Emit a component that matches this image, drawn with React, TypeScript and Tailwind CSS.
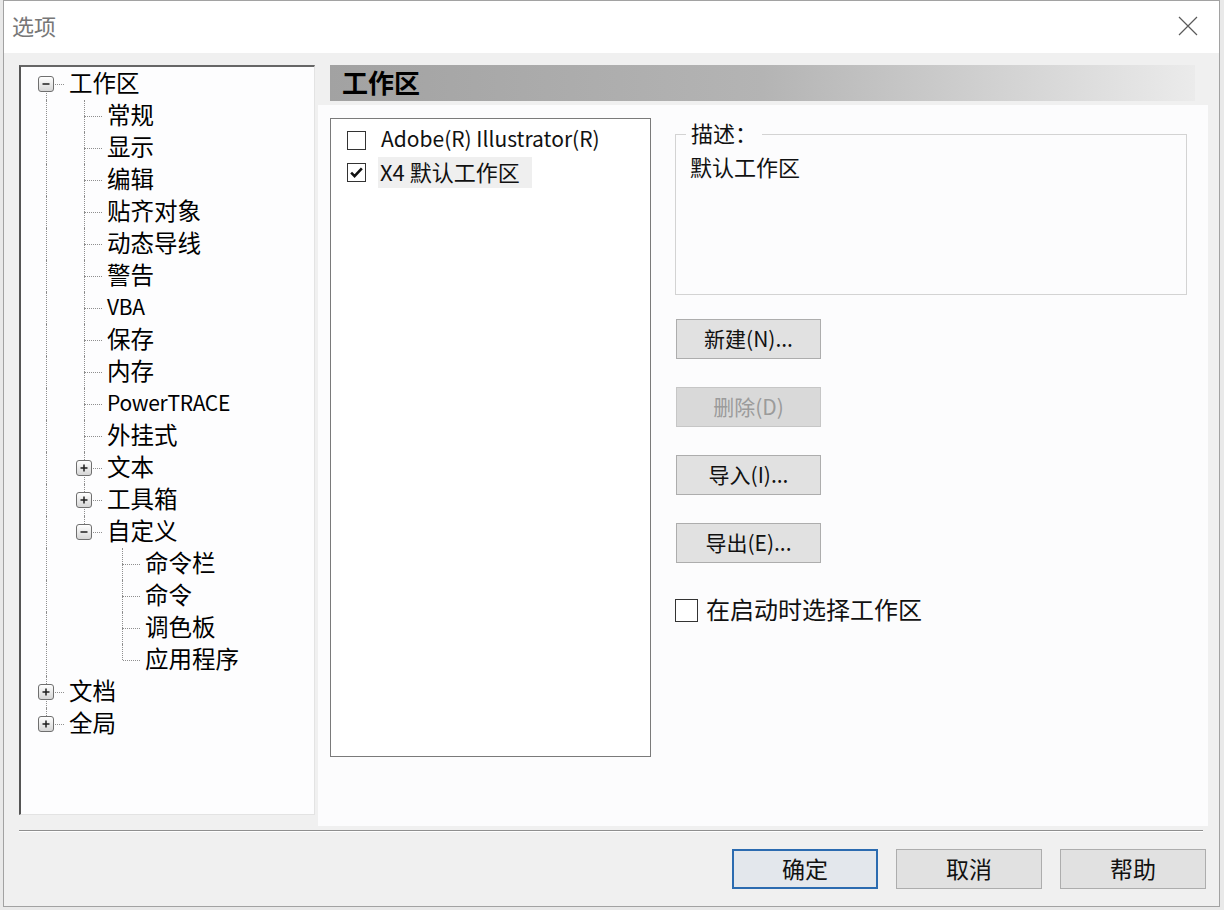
import { Fragment } from 'react'

type Row = {
  label: string
  level: number
  guides: boolean[]
  last: boolean
  first?: boolean
  exp?: 'open' | 'closed'
}

const ROWS: Row[] = [
  { label: '工作区', level: 0, guides: [], last: false, first: true, exp: 'open' },
  { label: '常规', level: 1, guides: [true], last: false },
  { label: '显示', level: 1, guides: [true], last: false },
  { label: '编辑', level: 1, guides: [true], last: false },
  { label: '贴齐对象', level: 1, guides: [true], last: false },
  { label: '动态导线', level: 1, guides: [true], last: false },
  { label: '警告', level: 1, guides: [true], last: false },
  { label: 'VBA', level: 1, guides: [true], last: false },
  { label: '保存', level: 1, guides: [true], last: false },
  { label: '内存', level: 1, guides: [true], last: false },
  { label: 'PowerTRACE', level: 1, guides: [true], last: false },
  { label: '外挂式', level: 1, guides: [true], last: false },
  { label: '文本', level: 1, guides: [true], last: false, exp: 'closed' },
  { label: '工具箱', level: 1, guides: [true], last: false, exp: 'closed' },
  { label: '自定义', level: 1, guides: [true], last: true, exp: 'open' },
  { label: '命令栏', level: 2, guides: [true, false], last: false },
  { label: '命令', level: 2, guides: [true, false], last: false },
  { label: '调色板', level: 2, guides: [true, false], last: false },
  { label: '应用程序', level: 2, guides: [true, false], last: true },
  { label: '文档', level: 0, guides: [], last: false, exp: 'closed' },
  { label: '全局', level: 0, guides: [], last: true, exp: 'closed' },
]

const DOT = 'border-dotted border-[#8f8f8f]'

function Expander({ open }: { open: boolean }) {
  return (
    <div className="absolute left-[11px] top-[8px] flex h-[16px] w-[16px] items-center justify-center rounded-[3px] border border-[#6f6f6f] bg-linear-to-b from-white to-[#d6d6d6]">
      <svg width="10" height="10" viewBox="0 0 10 10">
        <path d="M1.5 5h7" stroke="#1e1e1e" strokeWidth="1.5" />
        {!open && <path d="M5 1.5v7" stroke="#1e1e1e" strokeWidth="1.5" />}
      </svg>
    </div>
  )
}

function TreeRow({ row }: { row: Row }) {
  const latin = /^[A-Za-z]+$/.test(row.label)
  return (
    <div className="flex h-[32px] items-center">
      {row.guides.map((g, i) => (
        <div key={i} className="relative h-full w-[38px] shrink-0">
          {g && <div className={`absolute bottom-0 left-[19px] top-0 border-l ${DOT}`} />}
        </div>
      ))}
      <div className="relative h-full w-[38px] shrink-0">
        {!row.first && <div className={`absolute left-[19px] top-0 h-1/2 border-l ${DOT}`} />}
        {!row.last && <div className={`absolute bottom-0 left-[19px] top-1/2 border-l ${DOT}`} />}
        <div className={`absolute left-[20px] right-[1px] top-1/2 border-t ${DOT}`} />
        {row.exp && <Expander open={row.exp === 'open'} />}
      </div>
      <span
        className={`ml-[4px] whitespace-nowrap pb-[3px] leading-none text-black ${
          latin ? 'text-[21px] tracking-[-0.3px]' : 'text-[23.5px]'
        }`}
      >
        {row.label}
      </span>
    </div>
  )
}

function CheckBox({ checked, size = 18 }: { checked?: boolean; size?: number }) {
  return (
    <div
      className={`flex shrink-0 items-center justify-center border border-[#333] bg-white ${
        size === 18 ? 'h-[19px] w-[19px]' : 'h-[23px] w-[23px]'
      }`}
    >
      {checked && (
        <svg width="15" height="15" viewBox="0 0 14 14">
          <path d="M2 7.2l3.2 3.3L12 3.2" fill="none" stroke="#111" strokeWidth="2.4" />
        </svg>
      )}
    </div>
  )
}

function SideButton({ label, disabled }: { label: string; disabled?: boolean }) {
  return (
    <button
      className={`flex h-[40px] w-[145px] items-center justify-center border pb-[2px] text-[21px] leading-none ${
        disabled
          ? 'border-[#c6c6c6] bg-[#d9d9d9] text-[#9b9b9b]'
          : 'border-[#adadad] bg-[#e1e1e1] text-[#111]'
      }`}
    >
      {label}
    </button>
  )
}

function FooterButton({ label, primary }: { label: string; primary?: boolean }) {
  return (
    <button
      className={`flex h-[40px] w-[146px] items-center justify-center pb-[2px] text-[23px] leading-none text-[#111] ${
        primary ? 'border-2 border-[#2b6bb0] bg-[#e3e7ec]' : 'border border-[#adadad] bg-[#e1e1e1]'
      }`}
    >
      {label}
    </button>
  )
}

export default function App() {
  return (
    <div className="h-[910px] w-[1224px] bg-[#e9e9e9] font-['Noto_Sans_CJK_SC','Noto_Sans',sans-serif]">
      <div className="ml-[3px] flex h-[907px] w-[1217px] flex-col border border-[#a2a2a2] bg-[#f0f0f0]">
        {/* Title bar */}
        <div className="flex h-[52px] shrink-0 items-center justify-between bg-white pl-[8px] pr-[20px]">
          <span className="pb-[4px] text-[22px] leading-none text-[#777]">选项</span>
          <svg width="22" height="22" viewBox="0 0 22 22" className="mb-[2px]">
            <path d="M2 2l18 18M20 2L2 20" stroke="#5a5a5a" strokeWidth="1.2" />
          </svg>
        </div>

        {/* Main area */}
        <div className="flex h-[773px] shrink-0 pl-[15px] pt-[12px]">
          {/* Tree */}
          <div className="h-[750px] w-[296px] shrink-0 border-b border-l-2 border-r border-t-2 border-b-[#e3e3e3] border-l-[#555] border-r-[#e3e3e3] border-t-[#666] bg-[#fdfdfe] pl-[6px] pt-px">
            {ROWS.map((r, i) => (
              <Fragment key={i}>
                <TreeRow row={r} />
              </Fragment>
            ))}
          </div>

          {/* Right column */}
          <div className="ml-[3px] flex w-[890px] flex-col">
            <div className="ml-[12px] mr-[13px] flex h-[36px] shrink-0 items-center bg-linear-to-r from-[#a2a2a2] via-[#b4b4b4] to-[#ebebeb] pl-[12px]">
              <span className="pb-[3px] text-[26px] font-bold leading-none text-black">工作区</span>
            </div>
            <div className="mt-[4px] flex h-[721px] shrink-0 bg-[#fcfcfd] pl-[12px] pt-[13px]">
              {/* Workspace list */}
              <div className="h-[639px] w-[321px] shrink-0 border border-[#7a7a7a] bg-white pl-[16px] pt-[5px]">
                <div className="flex h-[32px] items-center">
                  <CheckBox />
                  <span className="ml-[15px] whitespace-nowrap pb-[3px] text-[21px] leading-none text-[#111]">
                    Adobe(R) Illustrator(R)
                  </span>
                </div>
                <div className="flex h-[32px] items-center">
                  <CheckBox checked />
                  <span className="ml-[12px] flex h-[31px] items-center whitespace-nowrap bg-[#efefef] pb-[3px] pl-[2px] pr-[12px] text-[22px] leading-none text-[#111]">
                    X4 默认工作区
                  </span>
                </div>
              </div>

              {/* Right controls */}
              <div className="ml-[24px] flex flex-col pt-[16px]">
                <div className="relative h-[161px] w-[512px] shrink-0 border border-[#d3d3d3] pl-[14px] pt-[20px]">
                  <span className="absolute left-[10px] top-[-14px] bg-[#fcfcfd] px-[5px] text-[22px] leading-none text-[#111]">
                    描述：
                  </span>
                  <div className="text-[22px] leading-none text-[#111]">默认工作区</div>
                </div>
                <div className="mt-[24px] flex flex-col gap-[28px] pl-px">
                  <SideButton label="新建(N)..." />
                  <SideButton label="删除(D)" disabled />
                  <SideButton label="导入(I)..." />
                  <SideButton label="导出(E)..." />
                </div>
                <div className="mt-[34px] flex items-center">
                  <CheckBox size={23} />
                  <span className="ml-[8px] pb-[3px] text-[24px] leading-none text-[#111]">在启动时选择工作区</span>
                </div>
              </div>
            </div>
          </div>
        </div>

        {/* Separator */}
        <div className="ml-[15px] mt-[4px] h-px w-[1184px] shrink-0 bg-[#8f8f8f]" />
        <div className="ml-[15px] h-px w-[1184px] shrink-0 bg-white" />

        {/* Footer buttons */}
        <div className="mt-[17px] flex justify-end gap-[18px] pr-[13px]">
          <FooterButton label="确定" primary />
          <FooterButton label="取消" />
          <FooterButton label="帮助" />
        </div>
      </div>
    </div>
  )
}
